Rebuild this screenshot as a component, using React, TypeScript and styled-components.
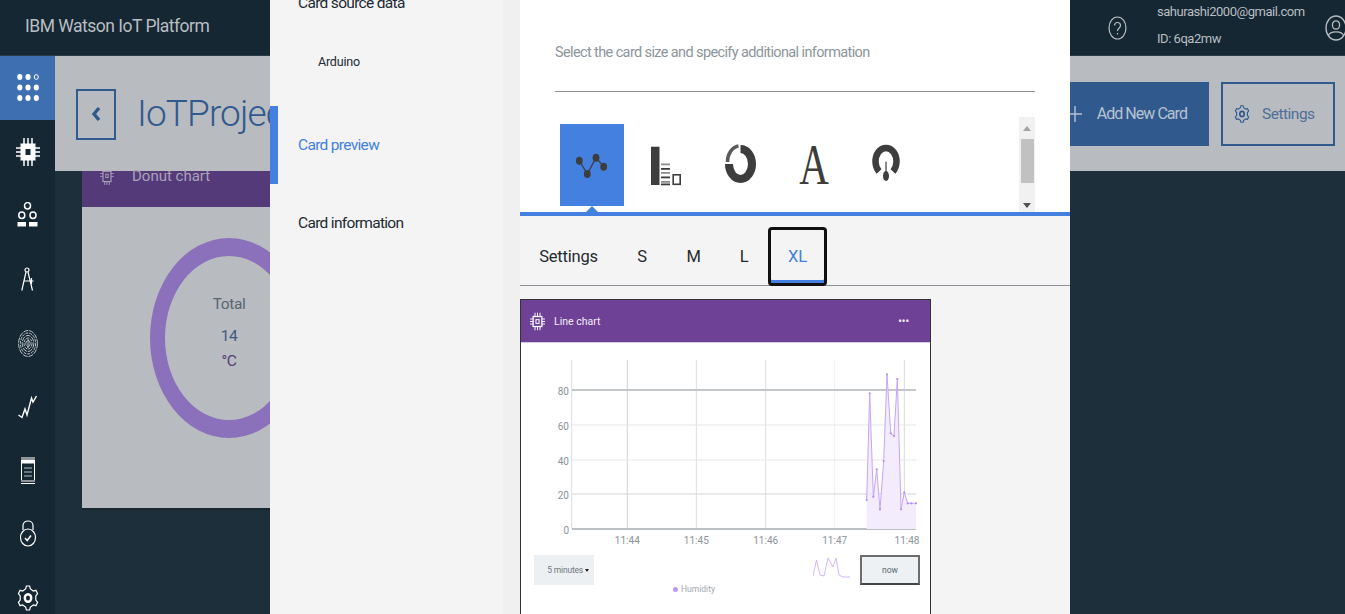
import React, { ReactElement } from 'react';
import styled, { createGlobalStyle } from 'styled-components';

const GlobalStyle = createGlobalStyle`
  html, body {
    margin: 0;
    padding: 0;
    height: 100%;
    overflow: hidden;
    background: #1c2f3b;
    font-family: Roboto, "Liberation Sans", sans-serif;
  }
  * { box-sizing: border-box; }
`;

const Page = styled.div`
  position: relative;
  display: flex;
  flex-direction: column;
  width: 1345px;
  height: 614px;
  overflow: hidden;
  background: #1c2f3b;
`;

const Header = styled.header`
  display: flex;
  align-items: center;
  flex: 0 0 56px;
  padding-left: 25px;
  background: #152733;
  border-bottom: 1px solid #2b3a45;
`;

const Brand = styled.div`
  margin-top: -4px;
  color: #b9bec2;
  font-size: 17.5px;
  letter-spacing: -0.5px;
`;

const UserArea = styled.div`
  display: flex;
  align-items: center;
  margin-left: auto;
  margin-right: -2px;
  color: #b9bec2;
`;

const UserText = styled.div`
  display: flex;
  flex-direction: column;
  gap: 12px;
  margin: -5px 20px 0 30px;
  width: 148px;
  font-size: 13px;
  line-height: 15px;
  letter-spacing: -0.47px;
`;

const Body = styled.div`
  display: flex;
  flex: 1;
  min-height: 0;
`;

const SideNav = styled.nav`
  flex: 0 0 55px;
  display: flex;
  flex-direction: column;
  background: #152733;
`;

const SideItem = styled.div<{ $active?: boolean }>`
  flex: 0 0 63.8px;
  display: flex;
  align-items: center;
  justify-content: center;
  background: ${(p) => (p.$active ? '#3e6fb0' : 'transparent')};
`;

const Main = styled.main`
  flex: 1;
  min-width: 0;
  display: flex;
  flex-direction: column;
`;

const Toolbar = styled.div`
  flex: 0 0 115px;
  display: flex;
  align-items: center;
  padding: 0 10px 0 21px;
  background: #b8bcc0;
`;

const BackButton = styled.div`
  display: flex;
  align-items: center;
  justify-content: center;
  width: 40px;
  height: 51px;
  margin-top: 1px;
  border: 2px solid #305a8e;
`;

const PageTitle = styled.h1`
  margin: 0 0 0 21px;
  color: #305a8e;
  font-size: 37px;
  font-weight: 300;
  letter-spacing: -0.9px;
  white-space: nowrap;
`;

const ToolbarActions = styled.div`
  display: flex;
  gap: 12px;
  margin-left: auto;
`;

const AddButton = styled.div`
  display: flex;
  align-items: center;
  justify-content: flex-end;
  gap: 15px;
  width: 180px;
  height: 64px;
  padding-right: 22px;
  background: #305a8e;
  color: #b8c3d1;
  font-size: 16px;
  letter-spacing: -0.95px;
  white-space: nowrap;
`;

const SettingsButton = styled.div`
  display: flex;
  align-items: center;
  gap: 12px;
  width: 114px;
  height: 64px;
  padding-left: 11px;
  border: 2px solid #305a8e;
  color: #4f6f98;
  font-size: 15.5px;
  letter-spacing: -0.5px;
`;

const CardArea = styled.div`
  padding: 0 0 0 27px;
`;

const DonutCard = styled.section`
  width: 420px;
  height: 337px;
  background: #b8bcc0;
  box-shadow: 0 2px 0 #17262f;
`;

const DonutHead = styled.div`
  display: flex;
  align-items: flex-start;
  gap: 16px;
  height: 36px;
  padding-left: 16px;
  background: #553a7a;
  color: #a9a3b8;
  font-size: 15px;
  line-height: 10px;
`;

const DonutHeadIcon = styled.svg`
  margin-top: -2px;
`;

const DonutBody = styled.div`
  position: relative;
  height: 301px;
  padding-top: 30px;
`;

const DonutRing = styled.svg`
  display: block;
  margin-left: 68px;
`;

const DonutLabels = styled.div`
  position: absolute;
  top: 88px;
  left: 67px;
  width: 160px;
  display: flex;
  flex-direction: column;
  align-items: center;
  color: #5a6672;
  font-size: 15.5px;
  letter-spacing: -0.4px;
`;

const DonutValue = styled.span`
  margin-top: 14px;
  color: #3d5a85;
`;

const DonutUnit = styled.span`
  margin-top: 7px;
  color: #553a7a;
`;

/* the modal */
const Modal = styled.div`
  position: absolute;
  top: 0;
  left: 270px;
  display: flex;
  width: 800px;
  height: 614px;
  background: #f4f4f4;
`;

const ModalNav = styled.div`
  flex: 0 0 250px;
  margin-top: -36px;
  background: linear-gradient(to right, #f4f4f4 233px, #f0f0f0 233px);
`;

const NavItem = styled.div<{ $active?: boolean }>`
  display: flex;
  align-items: center;
  height: 78px;
  padding-left: ${(p) => (p.$active ? '20px' : '28px')};
  border-left: ${(p) => (p.$active ? '8px solid #4480e0' : 'none')};
  color: ${(p) => (p.$active ? '#4480e0' : '#1d2a33')};
  font-size: 15.5px;
  letter-spacing: -0.68px;
`;

const NavSubItem = styled.div`
  display: flex;
  align-items: center;
  height: 38px;
  margin-bottom: 26px;
  padding-left: 48px;
  color: #1d2a33;
  font-size: 12.5px;
  letter-spacing: -0.2px;
`;

const ModalContent = styled.div`
  flex: 1;
  min-width: 0;
  display: flex;
  flex-direction: column;
`;

const TypePanel = styled.div`
  flex: 0 0 216px;
  padding: 0 35px;
  background: #fff;
  border-bottom: 4px solid #4480e0;
`;

const Description = styled.div`
  height: 92px;
  padding-top: 44px;
  border-bottom: 1px solid #8c9298;
  color: #8c959c;
  font-size: 14.5px;
  line-height: 18px;
  letter-spacing: -0.62px;
`;

const TypeRow = styled.div`
  display: flex;
  height: 95px;
  margin-top: 25px;
`;

const TypeList = styled.div`
  flex: 1;
  display: flex;
  gap: 10px;
  padding: 7px 0 0 5px;
`;

const TypeCell = styled.div<{ $selected?: boolean }>`
  position: relative;
  width: 64px;
  height: 82px;
  background: ${(p) => (p.$selected ? '#4480e0' : 'transparent')};

  &::after {
    content: '';
    display: ${(p) => (p.$selected ? 'block' : 'none')};
    position: absolute;
    left: 26px;
    top: 82px;
    border-left: 6px solid transparent;
    border-right: 6px solid transparent;
    border-bottom: 6px solid #4480e0;
  }
`;

const TypeSvg = styled.svg`
  display: block;
  width: 64px;
  height: 82px;
`;

const ScrollTrack = styled.div`
  flex: 0 0 16px;
  display: flex;
  flex-direction: column;
  align-items: center;
  background: #f1f1f1;
`;

const ScrollArrow = styled.div<{ $down?: boolean; $height: number }>`
  width: 0;
  height: 0;
  margin: ${(p) => p.$height}px 0 0;
  border-left: 4px solid transparent;
  border-right: 4px solid transparent;
  ${(p) => (p.$down ? 'border-top: 5px solid #505050;' : 'border-bottom: 5px solid #a3a3a3;')}
`;

const ScrollThumb = styled.div`
  width: 13px;
  height: 44px;
  margin-top: 8px;
  background: #c1c1c1;
`;

const TabBar = styled.div`
  flex: 0 0 70px;
  display: flex;
  align-items: flex-end;
  border-bottom: 1px solid #8c9298;
`;

const Tab = styled.div<{ $selected?: boolean; $width: number }>`
  display: flex;
  align-items: center;
  justify-content: center;
  width: ${(p) => p.$width}px;
  height: 59px;
  margin-bottom: -1px;
  color: ${(p) => (p.$selected ? '#4480e0' : '#242a30')};
  font-size: 16.5px;
  letter-spacing: -0.2px;
  ${(p) => p.$selected && `
    border: 3px solid #101010;
    border-radius: 4px;
    box-shadow: inset 0 -3px 0 #4480e0;
  `}
`;

const PreviewCard = styled.div`
  flex: 0 0 auto;
  width: 411px;
  height: 340px;
  margin-top: 13px;
  background: #fff;
  border: 1px solid #333;
`;

const PreviewHead = styled.div`
  display: flex;
  align-items: center;
  height: 43px;
  padding: 0 21px 0 9px;
  background: #6f4196;
  border-bottom: 1px solid #d9cde6;
  color: #f1ecf6;
  font-size: 10.5px;
`;

const PreviewTitle = styled.span`
  margin-left: 9px;
`;

const PreviewMenu = styled.span`
  margin-left: auto;
  font-size: 10px;
  font-weight: 700;
`;

const ChartSvg = styled.svg`
  display: block;
  width: 409px;
  height: 212px;
`;

const ChartControls = styled.div`
  display: flex;
  align-items: flex-start;
  height: 30px;
  padding: 0 10px 0 13px;
`;

const RangeSelect = styled.div`
  display: flex;
  align-items: center;
  justify-content: flex-end;
  gap: 2px;
  width: 60px;
  height: 30px;
  padding-right: 5px;
  background: #edf0f2;
  color: #6d7780;
  font-size: 8.5px;
  letter-spacing: -0.2px;
`;

const SelectCaret = styled.span`
  border-left: 2.5px solid transparent;
  border-right: 2.5px solid transparent;
  border-top: 3px solid #222;
`;

const Spark = styled.svg`
  display: block;
  width: 38px;
  height: 22px;
  margin: 2px 9px 0 auto;
`;

const NowButton = styled.div`
  display: flex;
  align-items: center;
  justify-content: center;
  width: 60px;
  height: 30px;
  background: #edf1f3;
  border: 2px solid #6d6d6d;
  border-bottom-color: #444;
  color: #5b6670;
  font-size: 8.5px;
`;

const Legend = styled.div`
  display: flex;
  align-items: center;
  gap: 3px;
  margin: -1px 0 0 152px;
  color: #a3a9ae;
  font-size: 8.5px;
`;

const LegendDot = styled.span`
  width: 5px;
  height: 5px;
  border-radius: 50%;
  background: #bf9af5;
`;

const gearPoints = (cx: number, cy: number, rx: number, ry: number): string => {
  const out: string[] = [];
  for (let i = 0; i < 6; i += 1) {
    const base = (i * Math.PI) / 3 - Math.PI / 2;
    [[-0.3, 1], [-0.16, 1.28], [0.16, 1.28], [0.3, 1]].forEach(([a, r]) => {
      out.push(`${(cx + Math.cos(base + a) * rx * r).toFixed(1)},${(cy + Math.sin(base + a) * ry * r).toFixed(1)}`);
    });
  }
  return out.join(' ');
};

const AppsIcon = (): ReactElement => (
  <svg width="26" height="30" viewBox="0 0 26 30" fill="#fff">
    {[4, 14.5, 25].map((y) => [4.8, 13, 21.3].map((x) => (
      <ellipse
        key={`${x}-${y}`}
        cx={x}
        cy={y}
        rx={x === 21.3 && y === 4 ? 2 : 2.6}
        ry={x === 21.3 && y === 4 ? 2.4 : 3}
        fill={x === 21.3 && y === 4 ? 'none' : '#fff'}
        stroke="#fff"
        strokeWidth={x === 21.3 && y === 4 ? 1 : 0}
      />
    )))}
  </svg>
);

const ChipIcon = ({ size = 24, thin = false }: { size?: number; thin?: boolean }): ReactElement => (
  <svg width={size} height={size + 4} viewBox="0 0 24 28" fill="none" stroke="#fff">
    <rect x="5" y="6" width="14" height="16" fill={thin ? 'none' : '#fff'} strokeWidth={thin ? 2 : 1} />
    <rect x="9.5" y="11" width="5" height="6" fill={thin ? 'none' : '#152733'} strokeWidth={thin ? 1.6 : 0} />
    {[8, 12, 16].map((x) => <path key={x} d={`M${x} 0V6M${x} 22V28`} strokeWidth="1.5" />)}
    {[10, 14, 18].map((y) => <path key={y} d={`M0 ${y}H5M19 ${y}H24`} strokeWidth="1.5" />)}
  </svg>
);

const OrgIcon = (): ReactElement => (
  <svg width="22" height="26" viewBox="0 0 22 26" fill="none" stroke="#fff" strokeWidth="1.5">
    <ellipse cx="10.5" cy="3.8" rx="3" ry="3.2" />
    <ellipse cx="4.8" cy="13.2" rx="3" ry="3.2" />
    <ellipse cx="16" cy="13.2" rx="3" ry="3.2" />
    <rect x="0.5" y="20" width="8.5" height="4.5" fill="#fff" strokeWidth="0" />
    <rect x="12" y="20" width="8.5" height="4.5" fill="#fff" strokeWidth="0" />
  </svg>
);

const CompassIcon = (): ReactElement => (
  <svg width="14" height="26" viewBox="0 0 14 26" fill="none" stroke="#fff" strokeWidth="1.2">
    <circle cx="6" cy="4" r="2" />
    <path d="M5 6L0.8 24.5M7 6L11.5 24.5M3 15H12.5M10.5 12V18" />
  </svg>
);

const FingerprintIcon = (): ReactElement => (
  <svg width="20" height="27" viewBox="0 0 20 27" fill="none" stroke="#e8eaec" strokeWidth="0.8">
    {[9.4, 7.6, 5.8, 4, 2.2].map((r, i) => (
      <ellipse key={r} cx="10" cy="13.5" rx={r} ry={r * 1.38} strokeDasharray={i % 2 ? '3 1' : '5 1'} />
    ))}
    <path d="M10 9V18" />
  </svg>
);

const PulseIcon = (): ReactElement => (
  <svg width="22" height="24" viewBox="0 0 22 24" fill="none" stroke="#fff" strokeWidth="1.4">
    <polyline points="1.5,20 5,22.5 8,14 10,20 14.5,3 16,7 19.5,1" />
  </svg>
);

const DocIcon = (): ReactElement => (
  <svg width="16" height="28" viewBox="0 0 16 28" fill="none">
    <rect x="1" y="0" width="14" height="3" fill="#8d959b" />
    <rect x="1" y="3" width="14" height="3" fill="#fff" />
    <rect x="1.5" y="6" width="13" height="18" stroke="#fff" />
    <path d="M4 11H12M4 15H12M4 19H12" stroke="#b8c0c5" />
    <rect x="1" y="23" width="14" height="2" fill="#8d959b" />
    <rect x="1" y="26" width="14" height="1" fill="#fff" />
  </svg>
);

const LockIcon = (): ReactElement => (
  <svg width="18" height="28" viewBox="0 0 18 28" fill="none" stroke="#fff" strokeWidth="1.2">
    <path d="M4 10V5.5C4 -0.5 14 -0.5 14 5.5V10" />
    <ellipse cx="9" cy="17.5" rx="7.5" ry="8.5" />
    <path d="M6 18L8.2 20.5L12 15.5" strokeWidth="1.5" />
  </svg>
);

const GearIcon = (): ReactElement => (
  <svg width="22" height="26" viewBox="0 0 22 26" fill="none" stroke="#fff">
    <polygon points={gearPoints(11, 13, 8, 9.5)} strokeWidth="1.2" />
    <ellipse cx="11" cy="13" rx="3.2" ry="3.8" strokeWidth="2.4" />
  </svg>
);

const SettingsGear = (): ReactElement => (
  <svg width="16" height="18" viewBox="0 0 22 26" fill="none" stroke="#305a8e">
    <polygon points={gearPoints(11, 13, 8, 9.5)} strokeWidth="1.6" />
    <ellipse cx="11" cy="13" rx="3.2" ry="3.8" strokeWidth="2.4" />
  </svg>
);

const HelpIcon = (): ReactElement => (
  <svg width="19" height="24" viewBox="0 0 19 24" fill="none" stroke="#b9bec2" strokeWidth="1.2">
    <ellipse cx="9.5" cy="12" rx="8.5" ry="11" />
    <path d="M6.5 9.5C6.5 5.5 12.5 5.5 12.5 9.5C12.5 12 9.5 12 9.5 15" />
    <path d="M9.5 17V18.5" />
  </svg>
);

const UserIcon = (): ReactElement => (
  <svg width="22" height="26" viewBox="0 0 22 26" fill="none" stroke="#b9bec2" strokeWidth="1.3">
    <ellipse cx="11" cy="13" rx="10" ry="12" />
    <ellipse cx="11" cy="10" rx="3.6" ry="4.2" />
    <path d="M3.5 21C4 15.5 18 15.5 18.5 21" />
  </svg>
);

const donutRing = 'M150 337a79 100 0 1 1 158 0a79 100 0 1 1 -158 0ZM165 337a64 82 0 1 0 128 0a64 82 0 1 0 -128 0Z';

const chartData: [number, number][] = [
  [866.7, 500], [869.7, 393.3], [873.3, 496.7], [876.7, 469.3], [880, 509.3],
  [883.7, 461], [887, 374.3], [890.7, 433.3], [894, 436], [897.3, 379],
  [901, 509.3], [904.3, 492.3], [907.7, 503.3], [911.3, 503.3], [916, 503.3],
];

const linePoints = chartData.map(([x, y]) => `${x},${y}`).join(' ');
const areaPoints = `866.7,529 ${linePoints} 916,529`;

const gridRows = [
  { y: 390, label: '80', color: '#c4c7ca', width: 1.8 },
  { y: 425, label: '60', color: '#e6e7e8', width: 1 },
  { y: 460, label: '40', color: '#e6e7e8', width: 1 },
  { y: 494, label: '20', color: '#d3d5d7', width: 1 },
  { y: 529, label: '0', color: '#bcc0c3', width: 1.8 },
];

const gridColumns = [
  { x: 627.3, label: '11:44', color: '#cfd1d3' },
  { x: 696.3, label: '11:45', color: '#dcdee0' },
  { x: 765.7, label: '11:46', color: '#dcdee0' },
  { x: 834.7, label: '11:47', color: '#eeeeef' },
  { x: 904.3, label: '11:48', color: '#d7d9db' },
];

const LineChart = (): ReactElement => (
  <ChartSvg viewBox="521 343 409 212" fontFamily="Roboto, sans-serif" fontSize="10" fill="#8b9298">
    <line x1="571.7" y1="360" x2="571.7" y2="529" stroke="#dcdee0" />
    {gridColumns.map(({ x, label, color }) => (
      <g key={label}>
        <line x1={x} y1="360" x2={x} y2="529" stroke={color} />
        <text x={label === '11:48' ? 907 : x} y="544" textAnchor="middle">{label}</text>
      </g>
    ))}
    {gridRows.map(({ y, label, color, width }) => (
      <g key={label}>
        <line x1="572" y1={y} x2="916" y2={y} stroke={color} strokeWidth={width} />
        <text x="569" y={y + 5} textAnchor="end">{label}</text>
      </g>
    ))}
    <polygon points={areaPoints} fill="#f3ecfc" />
    <polyline points={linePoints} fill="none" stroke="#c6a6f6" strokeWidth="1" />
    {chartData.map(([x, y]) => <circle key={x} cx={x} cy={y} r="1.1" fill="#b48df2" />)}
  </ChartSvg>
);

const LineTypeIcon = (): ReactElement => (
  <TypeSvg viewBox="0 0 64 82" fill="#3d3d3d">
    <path d="M19.3 36.7L27.3 50L36 33.7L43.7 42.7" fill="none" stroke="#3d3d3d" strokeWidth="1.3" />
    <ellipse cx="19.3" cy="36.7" rx="3.4" ry="4" />
    <ellipse cx="27.3" cy="50" rx="3.4" ry="4" />
    <ellipse cx="36" cy="33.7" rx="3.4" ry="4" />
    <ellipse cx="43.7" cy="42.7" rx="3.4" ry="4" />
  </TypeSvg>
);

const BarTypeIcon = (): ReactElement => (
  <TypeSvg viewBox="0 0 64 82" fill="#3d3d3d">
    <rect x="17" y="22.7" width="8.5" height="38.3" />
    {[39.5, 44, 48, 52.5, 57, 59.5].map((y, i) => (
      <rect key={y} x="27" y={y} width="9" height="1.8" fill={i % 2 ? '#3d3d3d' : '#8f8f8f'} />
    ))}
    <rect x="39.2" y="50.8" width="7" height="9.5" fill="none" stroke="#3d3d3d" strokeWidth="1.6" />
  </TypeSvg>
);

const DonutTypeIcon = (): ReactElement => (
  <TypeSvg viewBox="0 0 64 82" fill="none" stroke="#3d3d3d">
    <path d="M32.5 25A11.5 15 0 1 1 21 40" strokeWidth="8" />
    <path d="M19.5 38A12.5 16 0 0 1 30.5 22" stroke="#5a5a5a" strokeWidth="3.5" />
  </TypeSvg>
);

const TextTypeIcon = (): ReactElement => (
  <TypeSvg viewBox="0 0 64 82" fill="#3d3d3d">
    <text x="32" y="60" textAnchor="middle" fontFamily="Liberation Serif, serif" fontSize="56" transform="translate(8.6 0) scale(0.73 1)">A</text>
  </TypeSvg>
);

const GaugeTypeIcon = (): ReactElement => (
  <TypeSvg viewBox="0 0 64 82" fill="#3d3d3d">
    <path d="M23 47.5A10.5 13.5 0 1 1 37 47.5" fill="none" stroke="#3d3d3d" strokeWidth="6.5" />
    <rect x="29.4" y="37.7" width="1.2" height="13" />
    <ellipse cx="30" cy="52" rx="3" ry="5" />
  </TypeSvg>
);

const App = (): ReactElement => (
  <Page>
    <GlobalStyle />
    <Header>
      <Brand>IBM Watson IoT Platform</Brand>
      <UserArea>
        <HelpIcon />
        <UserText>
          <span>sahurashi2000@gmail.com</span>
          <span>ID: 6qa2mw</span>
        </UserText>
        <UserIcon />
      </UserArea>
    </Header>
    <Body>
      <SideNav>
        <SideItem $active><AppsIcon /></SideItem>
        <SideItem><ChipIcon /></SideItem>
        <SideItem><OrgIcon /></SideItem>
        <SideItem><CompassIcon /></SideItem>
        <SideItem><FingerprintIcon /></SideItem>
        <SideItem><PulseIcon /></SideItem>
        <SideItem><DocIcon /></SideItem>
        <SideItem><LockIcon /></SideItem>
        <SideItem><GearIcon /></SideItem>
      </SideNav>
      <Main>
        <Toolbar>
          <BackButton>
            <svg width="10" height="16" viewBox="0 0 10 16" fill="none" stroke="#305a8e" strokeWidth="3.4">
              <path d="M8 2L3 8L8 14" />
            </svg>
          </BackButton>
          <PageTitle>IoTProject</PageTitle>
          <ToolbarActions>
            <AddButton>
              <svg width="14" height="16" viewBox="0 0 14 16" stroke="#b8c3d1" strokeWidth="1.4">
                <path d="M7 0V16M0 8H14" />
              </svg>
              Add New Card
            </AddButton>
            <SettingsButton>
              <SettingsGear />
              Settings
            </SettingsButton>
          </ToolbarActions>
        </Toolbar>
        <CardArea>
          <DonutCard>
            <DonutHead>
              <DonutHeadIcon width="18" height="16" viewBox="0 0 24 28" fill="none" stroke="#a9a3b8">
                <rect x="5" y="4" width="14" height="18" strokeWidth="2" />
                <rect x="10" y="9" width="4" height="6" strokeWidth="1.6" />
                <path d="M0 8H5M0 13H5M19 8H24M19 13H24M8 22V28M12 22V28M16 22V28" strokeWidth="1.5" />
              </DonutHeadIcon>
              Donut chart
            </DonutHead>
            <DonutBody>
              <DonutRing width="160" height="203" viewBox="150 236 160 203">
                <path d={donutRing} fill="#8b70bb" fillRule="evenodd" />
              </DonutRing>
              <DonutLabels>
                <span>Total</span>
                <DonutValue>14</DonutValue>
                <DonutUnit>°C</DonutUnit>
              </DonutLabels>
            </DonutBody>
          </DonutCard>
        </CardArea>
      </Main>
    </Body>
    <Modal>
      <ModalNav>
        <NavItem>Card source data</NavItem>
        <NavSubItem>Arduino</NavSubItem>
        <NavItem $active>Card preview</NavItem>
        <NavItem>Card information</NavItem>
      </ModalNav>
      <ModalContent>
        <TypePanel>
          <Description>Select the card size and specify additional information</Description>
          <TypeRow>
            <TypeList>
              <TypeCell $selected><LineTypeIcon /></TypeCell>
              <TypeCell><BarTypeIcon /></TypeCell>
              <TypeCell><DonutTypeIcon /></TypeCell>
              <TypeCell><TextTypeIcon /></TypeCell>
              <TypeCell><GaugeTypeIcon /></TypeCell>
            </TypeList>
            <ScrollTrack>
              <ScrollArrow $height={9} />
              <ScrollThumb />
              <ScrollArrow $down $height={20} />
            </ScrollTrack>
          </TypeRow>
        </TypePanel>
        <TabBar>
          <Tab $width={97}>Settings</Tab>
          <Tab $width={50}>S</Tab>
          <Tab $width={53}>M</Tab>
          <Tab $width={48}>L</Tab>
          <Tab $selected $width={59}>XL</Tab>
        </TabBar>
        <PreviewCard>
          <PreviewHead>
            <ChipIcon size={15} thin />
            <PreviewTitle>Line chart</PreviewTitle>
            <PreviewMenu>•••</PreviewMenu>
          </PreviewHead>
          <LineChart />
          <ChartControls>
            <RangeSelect>5 minutes <SelectCaret /></RangeSelect>
            <Spark viewBox="0 0 38 22" fill="none" stroke="#c6a6f6" strokeWidth="0.8">
              <polyline points="0,19 3.5,3 7,18 11,19 15,1 20,10 23,1 26,18 30,20 37,20" />
            </Spark>
            <NowButton>now</NowButton>
          </ChartControls>
          <Legend><LegendDot />Humidity</Legend>
        </PreviewCard>
      </ModalContent>
    </Modal>
  </Page>
);

export default App;
